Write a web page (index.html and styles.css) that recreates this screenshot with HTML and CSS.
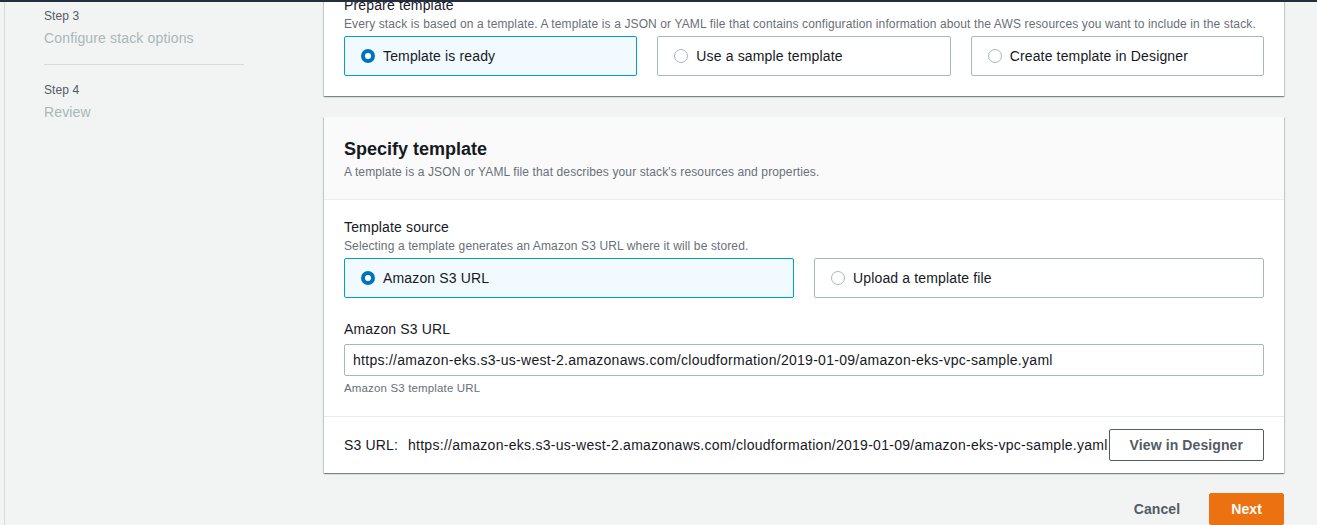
FILE: index.html
```html
<!DOCTYPE html>
<html lang="en">
<head>
<meta charset="utf-8">
<title>Create stack - Specify template</title>
<link rel="stylesheet" href="styles.css">
</head>
<body>
<div class="topbar"></div>
<div class="layout">
  <aside class="nav">
    <ol class="steps">
      <li class="step">
        <div class="step-num">Step 3</div>
        <div class="step-title">Configure stack options</div>
      </li>
      <li class="step">
        <div class="step-num">Step 4</div>
        <div class="step-title">Review</div>
      </li>
    </ol>
  </aside>
  <main class="content">
    <section class="card card-prepare">
      <div class="card-body">
        <div class="field-label">Prepare template</div>
        <div class="field-desc">Every stack is based on a template. A template is a JSON or YAML file that contains configuration information about the AWS resources you want to include in the stack.</div>
        <div class="tiles tiles-3">
          <div class="tile selected"><span class="radio checked"></span><span class="tile-label">Template is ready</span></div>
          <div class="tile"><span class="radio"></span><span class="tile-label">Use a sample template</span></div>
          <div class="tile"><span class="radio"></span><span class="tile-label">Create template in Designer</span></div>
        </div>
      </div>
    </section>

    <section class="card card-specify">
      <header class="card-header">
        <h2 class="card-title">Specify template</h2>
        <div class="card-desc">A template is a JSON or YAML file that describes your stack's resources and properties.</div>
      </header>
      <div class="card-body body-specify">
        <div class="field-label">Template source</div>
        <div class="field-desc">Selecting a template generates an Amazon S3 URL where it will be stored.</div>
        <div class="tiles tiles-2">
          <div class="tile selected"><span class="radio checked"></span><span class="tile-label">Amazon S3 URL</span></div>
          <div class="tile"><span class="radio"></span><span class="tile-label">Upload a template file</span></div>
        </div>
        <div class="field field-url">
          <div class="field-label">Amazon S3 URL</div>
          <div class="input url-text">https://amazon-eks.s3-us-west-2.amazonaws.com/cloudformation/2019-01-09/amazon-eks-vpc-sample.yaml</div>
          <div class="field-hint">Amazon S3 template URL</div>
        </div>
      </div>
      <div class="card-footer">
        <span class="s3-label">S3 URL:</span>
        <span class="s3-value url-text">https://amazon-eks.s3-us-west-2.amazonaws.com/cloudformation/2019-01-09/amazon-eks-vpc-sample.yaml</span>
        <button class="btn btn-normal">View in Designer</button>
      </div>
    </section>

    <div class="actions">
      <button class="btn btn-link">Cancel</button>
      <button class="btn btn-primary">Next</button>
    </div>
  </main>
</div>
</body>
</html>
```

FILE: styles.css
```css
* { box-sizing: border-box; }

html, body {
  margin: 0;
  padding: 0;
  background: #f2f3f3;
  font-family: "Liberation Sans", Arial, sans-serif;
  color: #16191f;
  overflow: hidden;
}

.topbar {
  position: fixed;
  top: 0;
  left: 0;
  right: 0;
  height: 2px;
  background: #232f3e;
  z-index: 10;
}

.layout {
  display: flex;
  align-items: flex-start;
  min-height: 525px;
}

.nav {
  margin-left: 4px;
  width: 320px;
  align-self: stretch;
  border-left: 1px solid #d5dbdb;
  padding: 8px 0 0 39px;
}

.steps {
  list-style: none;
  margin: 0;
  padding: 0;
  width: 200px;
}

.step:not(:last-child) {
  padding-bottom: 15px;
  border-bottom: 1px solid #d5dbdb;
}

.step + .step { padding-top: 17px; }

.step-num {
  font-size: 12px;
  line-height: 16px;
  color: #545b64;
  letter-spacing: 0.1px;
}

.step-title {
  margin-top: 3px;
  font-size: 14px;
  line-height: 22px;
  color: #aab7b8;
  letter-spacing: 0.15px;
}

.content {
  width: 960px;
  margin-top: -26px;
}

.card {
  background: #fff;
  box-shadow: 0 1px 1px 0 rgba(0, 28, 36, 0.3), 1px 1px 1px 0 rgba(0, 28, 36, 0.15), -1px 1px 1px 0 rgba(0, 28, 36, 0.15);
}

.card-body { padding: 20px; }

.card-specify { margin-top: 21px; }

.card-header {
  background: #fafafa;
  border-bottom: 1px solid #eaeded;
  padding: 20px 20px 19px;
}

.card-title {
  margin: 0;
  font-size: 18px;
  line-height: 24px;
  font-weight: 700;
  color: #16191f;
}

.card-desc {
  margin-top: 3px;
  font-size: 12px;
  line-height: 16px;
  color: #687078;
  letter-spacing: 0.12px;
}

.body-specify { padding-top: 16px; }

.field-label {
  font-size: 14px;
  line-height: 22px;
  color: #16191f;
  letter-spacing: 0.15px;
}

.field-desc {
  font-size: 12px;
  line-height: 16px;
  color: #687078;
  letter-spacing: 0.12px;
}

.tiles {
  display: grid;
  gap: 20px;
  margin-top: 4px;
}

.tiles-3 { grid-template-columns: repeat(3, 1fr); }
.tiles-2 { grid-template-columns: repeat(2, 1fr); }

.tile {
  display: flex;
  align-items: center;
  gap: 8px;
  height: 40px;
  padding: 8px 16px;
  border: 1px solid #aab7b8;
  border-radius: 2px;
  background: #fff;
}

.tile.selected {
  background: #f1faff;
  border-color: #00a1c9;
}

.tile-label {
  font-size: 14px;
  line-height: 22px;
  color: #16191f;
  letter-spacing: 0.15px;
}

.radio {
  flex: none;
  width: 14px;
  height: 14px;
  border-radius: 50%;
  border: 1px solid #aab7b8;
  background: #fff;
}

.radio.checked {
  border: 4px solid #0073bb;
}

.field-url { margin-top: 20px; }

.input {
  margin-top: 4px;
  height: 32px;
  padding: 4px 8px;
  border: 1px solid #aab7b8;
  border-radius: 2px;
  font-size: 14px;
  line-height: 22px;
  color: #16191f;
  white-space: nowrap;
  overflow: hidden;
}

.url-text { letter-spacing: 0.28px; }

.field-hint {
  margin-top: 4px;
  font-size: 11.5px;
  line-height: 16px;
  color: #687078;
  letter-spacing: 0.15px;
}

.card-footer {
  display: flex;
  align-items: center;
  border-top: 1px solid #eaeded;
  padding: 12px 20px;
  font-size: 14px;
  line-height: 22px;
  color: #16191f;
}

.s3-label {
  flex: none;
  white-space: nowrap;
  margin-right: 10px;
  letter-spacing: 0.15px;
}

.s3-value {
  flex: none;
  white-space: nowrap;
}

.btn {
  font-family: inherit;
  font-size: 14px;
  line-height: 22px;
  font-weight: 700;
  height: 32px;
  padding: 4px 20px;
  border-radius: 2px;
  border: 1px solid transparent;
  background: transparent;
  letter-spacing: 0.1px;
  white-space: nowrap;
  cursor: pointer;
}

.btn-normal {
  margin-left: auto;
  flex: none;
  border-color: #545b64;
  background: #fff;
  color: #545b64;
}

.actions {
  display: flex;
  justify-content: flex-end;
  gap: 8px;
  margin-top: 20px;
}

.btn-link { color: #545b64; }

.btn-primary {
  background: #ec7211;
  border-color: #ec7211;
  color: #fff;
  padding: 4px 21px;
}
```
